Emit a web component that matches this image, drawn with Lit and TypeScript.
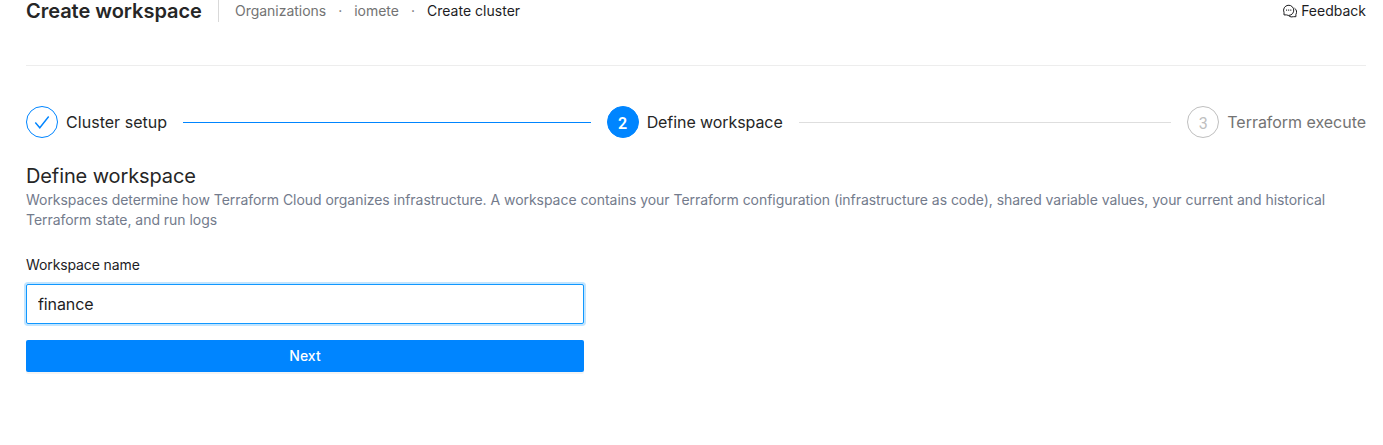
import { LitElement, html, css } from "lit";
import { customElement } from "lit/decorators.js";

@customElement("app-root")
export class AppRoot extends LitElement {
  static styles = css`
    :host { display: block; height: 445px; overflow: hidden; background: #fff; color: #1d1d1f; font: 14px/20px Inter, sans-serif; }
    * { box-sizing: border-box; }
    .page { padding: 0 17px 0 26px; }
    header { display: flex; height: 66px; border-bottom: 1px solid #ededed; align-items: flex-start; }
    h1 { margin: 0; width: 193px; font-size: 20px; line-height: 22px; font-weight: 600; letter-spacing: -.03px; color: #262626; border-right: 1px solid #d9d9d9; height: 22px; }
    nav { display: flex; padding-left: 16px; line-height: 22px; color: #737373; letter-spacing: -.02px; }
    .dot { width: 28px; text-align: center; }
    .current { color: #1d1d1f; letter-spacing: .02px; }
    .feedback { margin-left: auto; display: flex; gap: 4px; align-items: center; line-height: 22px; }
    .feedback svg { width: 14px; height: 14px; }
    .steps { display: flex; margin-top: 40px; height: 32px; align-items: center; font-size: 16px; color: #262626; }
    .step { display: flex; gap: 8px; align-items: center; white-space: nowrap; flex: 1; }
    .first { letter-spacing: .04px; }
    .second { letter-spacing: -.08px; }
    .third { letter-spacing: -.03px; }
    .circle { width: 32px; height: 32px; flex: none; border-radius: 50%; border: 1px solid #0085ff; display: flex; align-items: center; justify-content: center; color: #0085ff; font-family: Roboto, sans-serif; }
    .number { padding-top: 4px; }
    .active { background: #0085ff; color: #fff; font-weight: 600; }
    .wait { color: #737373; flex: none; }
    .wait .circle { border-color: #bfbfbf; color: #bfbfbf; }
    .line { height: 1px; background: #dedede; margin: 0 16px 0 8px; flex: 1; }
    .done { background: #0085ff; }
    h2 { margin: 24px 0 0; font-size: 20px; line-height: 28px; font-weight: 400; letter-spacing: -.11px; color: #262626; }
    p { margin: 0; color: #737b8c; letter-spacing: -.041px; }
    form { width: 558px; }
    label { display: block; margin-top: 25px; letter-spacing: -.11px; }
    input { display: block; width: 100%; height: 40px; margin-top: 9px; padding: 0 11px; font: 16px Inter, sans-serif; letter-spacing: -.1px; color: #1d1d1f; border: 1px solid #1098ff; border-radius: 2px; outline: none; box-shadow: 0 0 0 2px #c2e5ff; }
    button { display: block; width: 100%; height: 32px; margin-top: 16px; padding: 0; border: 0; border-radius: 2px; background: #0085ff; color: #fff; font: 500 14px/20px Inter, sans-serif; box-shadow: 0 2px 0 rgba(0,0,0,.045); }
  `;
  render() {
    return html`<div class="page">
      <header><h1>Create workspace</h1><nav><span>Organizations</span><span class="dot">·</span><span>iomete</span><span class="dot">·</span><span class="current">Create cluster</span></nav>
        <div class="feedback"><svg viewBox="0 0 14 14" fill="none" stroke="currentColor"><path d="M1 10.9V8.4A5.1 5.1 0 1 1 3.4 10.9Z"/><path d="M11.5 4.2A4.5 4.5 0 0 1 12.9 10.4V12.7H10.6A5 5 0 0 1 5.7 11.8"/><path d="M3.1 6.2h1M5.2 6.2h1M7.3 6.2h1" stroke-width="1.2"/></svg><span>Feedback</span></div></header>
      <div class="steps">
        <div class="step"><span class="circle"><svg width="16" height="16" viewBox="0 0 16 16" fill="none" stroke="currentColor" stroke-width="1.4"><path d="M1.3 8.5l4.5 5.3L14.7 2.5"/></svg></span><span class="first">Cluster setup</span><div class="line done"></div></div>
        <div class="step"><span class="circle number active">2</span><span class="second">Define workspace</span><div class="line"></div></div>
        <div class="step wait"><span class="circle number">3</span><span class="third">Terraform execute</span></div>
      </div>
      <h2>Define workspace</h2>
      <p>Workspaces determine how Terraform Cloud organizes infrastructure. A workspace contains your Terraform configuration (infrastructure as code), shared variable values, your current and historical Terraform state, and run logs</p>
      <form><label for="name">Workspace name</label><input id="name" .value=${"finance"}><button type="button">Next</button></form>
    </div>`;
  }
}
